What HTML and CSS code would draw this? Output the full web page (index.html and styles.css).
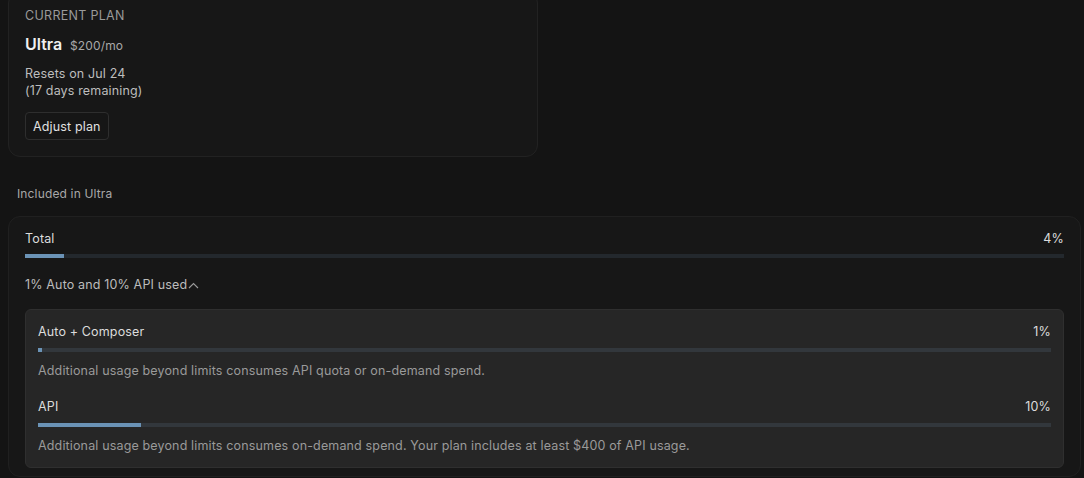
FILE: index.html
```html
<!DOCTYPE html>
<html lang="en">
<head>
    <meta charset="UTF-8">
    <meta name="viewport" content="width=device-width, initial-scale=1.0">
    <title>Usage</title>
    <link rel="stylesheet" href="styles.css">
</head>
<body>
    <div class="plan-card">
        <div class="plan-label">CURRENT PLAN</div>
        <div class="plan-name">
            <span class="plan-title">Ultra</span>
            <span class="plan-price">$200/mo</span>
        </div>
        <p class="plan-reset">Resets on Jul 24<br>(17 days remaining)</p>
        <button class="btn">Adjust plan</button>
    </div>

    <div class="section-title">Included in Ultra</div>

    <div class="usage-card">
        <div class="row">
            <span class="row-label">Total</span>
            <span class="row-value">4%</span>
        </div>
        <div class="bar"><div class="bar-fill" style="width: 3.8%"></div></div>

        <div class="toggle">
            1% Auto and 10% API used
            <svg width="11" height="7" viewBox="0 0 11 7" fill="none">
                <path d="M1 6 L5.5 1.5 L10 6" stroke="#9a9a9a" stroke-width="1.1"/>
            </svg>
        </div>

        <div class="breakdown">
            <div class="item">
                <div class="row">
                    <span class="row-label">Auto + Composer</span>
                    <span class="row-value">1%</span>
                </div>
                <div class="bar"><div class="bar-fill" style="width: 0.4%"></div></div>
                <p class="item-desc">Additional usage beyond limits consumes API quota or on-demand spend.</p>
            </div>
            <div class="item">
                <div class="row">
                    <span class="row-label">API</span>
                    <span class="row-value">10%</span>
                </div>
                <div class="bar"><div class="bar-fill" style="width: 10.2%"></div></div>
                <p class="item-desc">Additional usage beyond limits consumes on-demand spend. Your plan includes at least $400 of API usage.</p>
            </div>
        </div>
    </div>
</body>
</html>
```

FILE: styles.css
```css
body {
    font-family: Inter, "Noto Sans", sans-serif;
    margin: 0;
    padding: 0 3px 0 8px;
    background: #141414;
    color: #d6d6d6;
    font-size: 12.5px;
    letter-spacing: 0.15px;
    overflow: hidden;
}

.plan-card {
    width: 496px;
    margin-top: -9px;
    padding: 16px;
    background: #171717;
    border: 1px solid #222;
    border-radius: 12px;
}

.plan-label {
    line-height: 16px;
    color: #9a9a9a;
    letter-spacing: 0.3px;
}

.plan-name {
    margin-top: 8px;
    line-height: 24px;
}

.plan-title {
    font-size: 16px;
    font-weight: 600;
    letter-spacing: 0;
    color: #f0f0f0;
    margin-right: 4px;
}

.plan-price {
    font-size: 12px;
    color: #a8a8a8;
}

.plan-reset {
    margin: 7px 0 0;
    line-height: 17px;
    color: #bdbdbd;
}

.btn {
    margin-top: 13px;
    height: 28px;
    padding: 0 7px;
    background: #161616;
    color: #e0e0e0;
    border: 1px solid #2e2e2e;
    border-radius: 4px;
    font-family: inherit;
    font-size: 12.5px;
    letter-spacing: 0.15px;
}

.section-title {
    margin-top: 29px;
    padding: 0 9px;
    line-height: 16px;
    font-size: 12px;
    color: #a8a8a8;
}

.usage-card {
    margin-top: 14px;
    padding: 14px 16px 8px;
    background: #171717;
    border: 1px solid #202020;
    border-radius: 12px;
}

.row {
    display: flex;
    justify-content: space-between;
    line-height: 16px;
}

.row-label {
    color: #dcdcdc;
}

.row-value {
    color: #dcdcdc;
}

.bar {
    margin-top: 8px;
    height: 4px;
    background: #23282d;
}

.usage-card > .bar {
    margin-top: 7px;
}

.bar-fill {
    height: 100%;
    background: #6b93b6;
}

.toggle {
    display: flex;
    align-items: center;
    gap: 1px;
    margin-top: 19px;
    line-height: 16px;
    color: #bcbcbc;
}

.breakdown {
    margin-top: 16px;
    padding: 14px 12px 13px;
    background: #262626;
    border: 1px solid #2f2f2f;
    border-radius: 6px;
}

.breakdown .bar {
    margin-top: 8px;
    background: #32373c;
}

.item + .item {
    margin-top: 20px;
}

.item-desc {
    margin: 11px 0 0;
    line-height: 16px;
    color: #9a9a9a;
}
```
